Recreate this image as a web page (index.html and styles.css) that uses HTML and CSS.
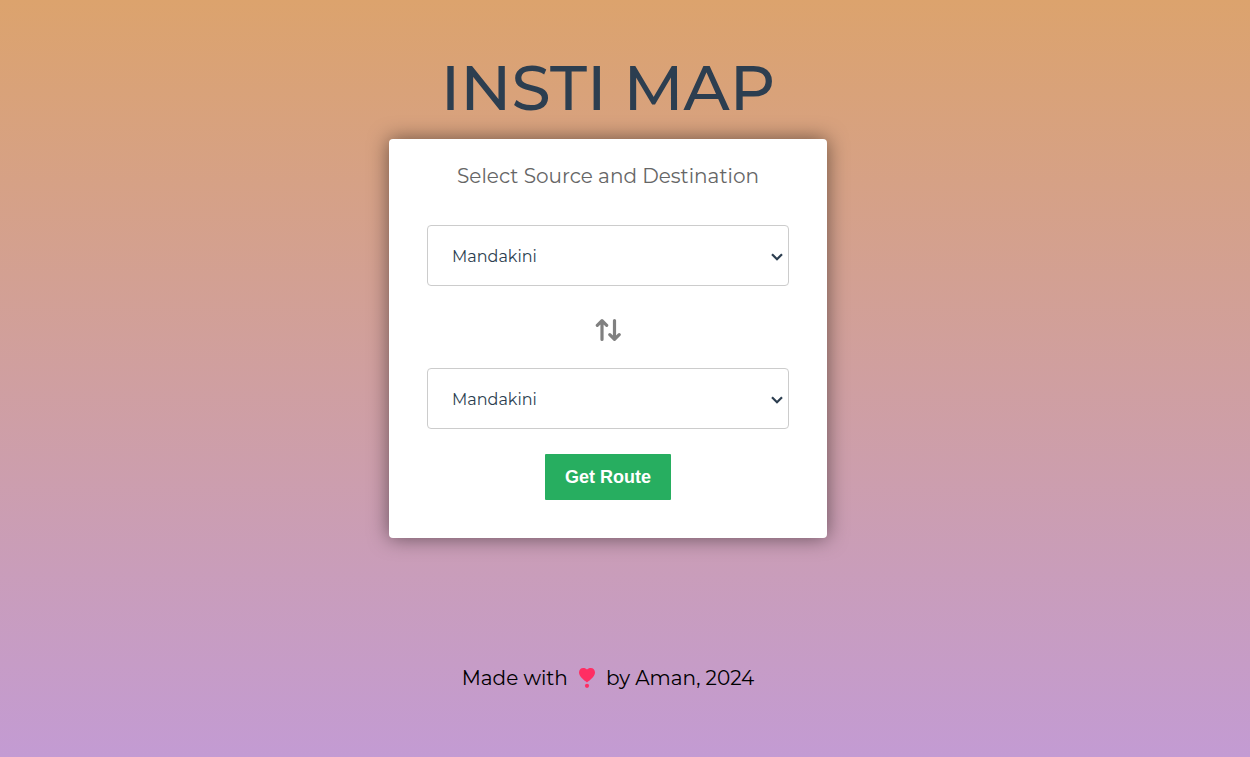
FILE: index.html
```html
<!DOCTYPE html>
<html lang="en">
<head>
<meta charset="utf-8">
<title>Insti Map</title>
<meta name="viewport" content="width=device-width, initial-scale=1">
<link rel="stylesheet" href="styles.css">
</head>
<body>
<main class="page">
  <h1 class="title">INSTI MAP</h1>
  <form class="card">
    <h2 class="card-heading">Select Source and Destination</h2>
    <div class="select-wrap">
      <select class="place" id="source" aria-label="Source"><option>Mandakini</option></select>
      <svg class="chevron" viewBox="0 0 12 8" aria-hidden="true"><path d="M1 1.2 6 6.2 11 1.2"/></svg>
    </div>
    <button class="swap" type="button" aria-label="Swap source and destination">
      <svg class="swap-icon" viewBox="0 0 26 24" aria-hidden="true"><path d="M7 21.500V3M2.300 7.300 7 2.600l4.700 4.700M19.500 2.500V21M14.800 16.700l4.700 4.700 4.700-4.700"/></svg>
    </button>
    <div class="select-wrap">
      <select class="place" id="destination" aria-label="Destination"><option>Mandakini</option></select>
      <svg class="chevron" viewBox="0 0 12 8" aria-hidden="true"><path d="M1 1.2 6 6.2 11 1.2"/></svg>
    </div>
    <button class="route" type="button">Get Route</button>
  </form>
  <footer class="footer">
    <span>Made with</span>
    <svg class="heart" viewBox="0 0 16 20" role="img" aria-label="love"><path d="M8 14.4C5.500 12.500 0 8.800 0 4.500 0 1.800 1.800 0 4.200 0 5.900 0 7.300.6 8 1.600 8.700.6 10.100 0 11.800 0 14.200 0 16 1.800 16 4.500c0 4.300-5.500 8-8 9.900z"/><circle cx="8" cy="17.800" r="2.100"/></svg>
    <span>by Aman, 2024</span>
  </footer>
</main>
</body>
</html>
```
FILE: styles.css
```css
* {
  box-sizing: border-box;
}

body {
  margin: 0;
  min-height: 100vh;
  background: linear-gradient(#dca36d, #c39bd3);
  font-family: Montserrat, Inter, "Open Sans", sans-serif;
}

.page {
  display: flex;
  flex-direction: column;
  align-items: center;
  padding: 48px 34px 0 0;
}

.title {
  margin: 0 0 11px;
  color: #2c3e50;
  font-size: 63px;
  font-weight: 500;
  line-height: 80px;
}

.card {
  display: flex;
  flex-direction: column;
  align-items: center;
  width: 100%;
  max-width: 438px;
  padding: 24px 38px 38px;
  border-radius: 4px;
  background: #fff;
  box-shadow: 0 0 20px rgba(0, 0, 0, 0.5);
}

.card-heading {
  margin: 0 0 36px;
  color: #666;
  font-size: 20px;
  font-weight: 400;
  line-height: 26px;
}

.select-wrap {
  position: relative;
  width: 100%;
}

.place {
  display: block;
  width: 100%;
  height: 61px;
  padding: 2px 24px 0;
  border: 1px solid #ccc;
  border-radius: 4px;
  appearance: none;
  background: #fff;
  color: #2c3e50;
  font-family: inherit;
  font-size: 16px;
  font-weight: 400;
}

.chevron {
  position: absolute;
  top: 28px;
  right: 6px;
  width: 12px;
  height: 8px;
  fill: none;
  stroke: #2c3e50;
  stroke-width: 2.2;
  pointer-events: none;
}

.swap {
  display: flex;
  margin: 32px 0 26px;
  padding: 0;
  border: 0;
  background: none;
}

.swap-icon {
  width: 26px;
  height: 24px;
  fill: none;
  stroke: #808080;
  stroke-width: 3.2;
  stroke-linecap: round;
  stroke-linejoin: round;
}

.route {
  margin-top: 25px;
  padding: 12px 20px;
  border: 0;
  border-radius: 1px;
  background: #27ae60;
  color: #fff;
  font-family: "Liberation Sans", Arial, sans-serif;
  font-size: 18px;
  font-weight: 700;
  line-height: 22px;
}

.footer {
  display: flex;
  align-items: center;
  gap: 11px;
  margin-top: 127px;
  color: #000;
  font-size: 20px;
  font-weight: 400;
  line-height: 26px;
}

.heart {
  width: 16px;
  height: 20px;
  fill: #ff2e63;
}
```
